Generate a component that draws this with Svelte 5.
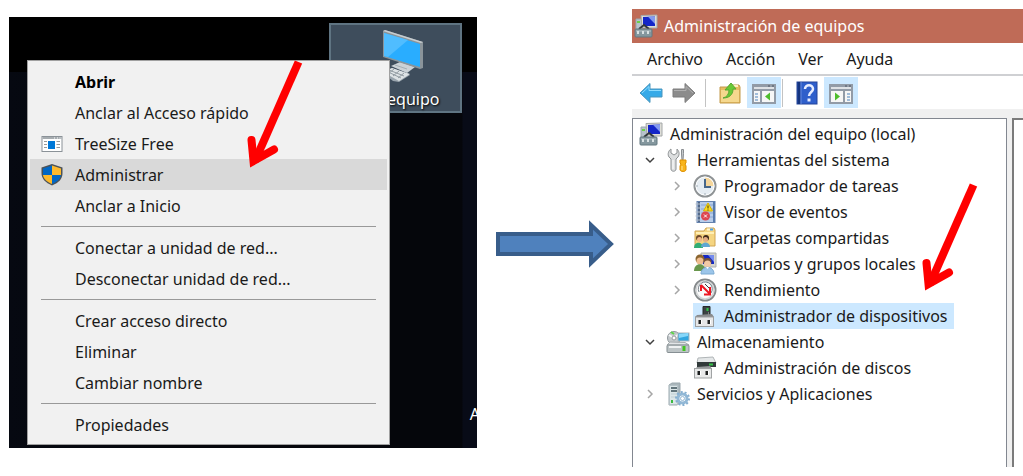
<script>
  const contextMenu = [
    [
      { label: "Abrir", bold: true },
      { label: "Anclar al Acceso rápido" },
      { label: "TreeSize Free", icon: "treesize" },
      { label: "Administrar", icon: "shield", active: true },
      { label: "Anclar a Inicio" },
    ],
    [
      { label: "Conectar a unidad de red..." },
      { label: "Desconectar unidad de red..." },
    ],
    [
      { label: "Crear acceso directo" },
      { label: "Eliminar" },
      { label: "Cambiar nombre" },
    ],
    [{ label: "Propiedades" }],
  ];

  const menuBar = ["Archivo", "Acción", "Ver", "Ayuda"];

  const tree = [
    {
      label: "Herramientas del sistema",
      icon: "tools",
      open: true,
      children: [
        { label: "Programador de tareas", icon: "clock", closed: true },
        { label: "Visor de eventos", icon: "events", closed: true },
        { label: "Carpetas compartidas", icon: "shared", closed: true },
        { label: "Usuarios y grupos locales", icon: "users", closed: true },
        { label: "Rendimiento", icon: "gauge", closed: true },
        { label: "Administrador de dispositivos", icon: "device" },
      ],
    },
    {
      label: "Almacenamiento",
      icon: "storage",
      open: true,
      children: [{ label: "Administración de discos", icon: "disk" }],
    },
    { label: "Servicios y Aplicaciones", icon: "services", closed: true },
  ];

  let selected = $state("Administrador de dispositivos");
</script>

{#snippet redArrow()}
  <svg class="red-arrow" viewBox="0 0 60 116" aria-hidden="true">
    <path d="M53.5 4 10 103" stroke-linecap="butt" />
    <path d="M6.5 82 8.5 103 29 91.5" stroke-linecap="round" />
  </svg>
{/snippet}

{#snippet icon(name)}
  <svg class="icon" viewBox="0 0 24 24" aria-hidden="true">
    {#if name === "treesize"}
      <rect x="2" y="4.5" width="20" height="15" fill="#fff" stroke="#8b9298" />
      <path d="M2.5 6h19" stroke="#a6acb0" stroke-width="2" />
      <path d="M14 6h1M17 6h1M19.5 6h1" stroke="#fff" />
      <rect x="8" y="9" width="7" height="8" fill="#0078d7" />
      <path d="M4 9.5h3M4 12.5h3M4 15.5h3M16.5 9.5h3.5M16.5 12.5h3.5M16.5 15.5h3.5" stroke="#999" />
    {:else if name === "shield"}
      <path d="M12 1 22.5 4.5V10c0 6-3.5 9.5-10.500 12.5C5.500 19.5 1.500 16 1.500 10V4.5z" fill="#4c5358" />
      <path d="M12 2.500V12H3V5.500z" fill="#0067c5" />
      <path d="M12 2.500V12h9V5.500z" fill="#fdb92c" />
      <path d="M12 12v9c-5-2-8.500-5-9-9z" fill="#fdb92c" />
      <path d="M12 12v9c5-2 8.500-5 9-9z" fill="#0067c5" />
    {:else if name === "computer"}
      <path d="M2 5h6v11H2z" fill="#b7c3cb" stroke="#9aa6ae" />
      <path d="M3 8h3" stroke="#6ccf49" stroke-width="2" />
      <path d="M7 1.5 23 1v13L8 14z" fill="#deded8" stroke="#a5a8a8" />
      <path d="m9 3 12-.5V12L9 12z" fill="#1426c8" />
      <path d="M14 2.700 21 2.5V10z" fill="#839af0" />
      <path d="m5 15 5-4 5 4" fill="none" stroke="#32383b" stroke-width="2" />
      <rect x="1" y="15" width="17" height="8" rx="1" fill="#84979e" stroke="#647980" />
      <path d="M2 17h15" stroke="#b4c1c5" />
      <path d="M4 17v3M9 17v3M14 17v3" stroke="#d8e1e3" stroke-width="2" />
    {:else if name === "tools"}
      <path d="M5 1v4l3 2 3-2V1c2 2 3 5 1 8l-2 2v10c0 3-5 3-5 0V11L3 9C1 6 3 2 5 1z" fill="#dcdedf" stroke="#8d9193" />
      <path d="M7 12v9" stroke="#fff" />
      <path d="M15.5 1.5h2v4L17 12h-1l-.5-6z" fill="#c6c9cb" stroke="#898d90" />
      <path d="M14 12h6v3l-1 1 1 2v4c-1 2-5 2-6 0v-4l1-2-1-1z" fill="#f8b41b" stroke="#dd8f00" />
      <path d="M16 18v4" stroke="#ffe293" />
    {:else if name === "clock"}
      <circle cx="12" cy="12" r="10.5" fill="#e6edf3" stroke="#8f9395" stroke-width="2" />
      <path d="M12 3a9 9 0 0 1 9 9h-9z" fill="#f5d69b" />
      <circle cx="12" cy="12" r="9" fill="none" stroke="#fff" />
      <path d="M12 5v8h6" fill="none" stroke="#48678a" stroke-width="2" />
      <path d="M12 19v2M3 12h2" stroke="#a4afb7" />
    {:else if name === "events"}
      <rect x="4" y="1.5" width="18" height="21" fill="#b8cdea" stroke="#6482ae" />
      <path d="M8 5h13M8 9h13M8 13h13M8 17h13" stroke="#8aa7d2" />
      <path d="M21 2v20" stroke="#587caf" stroke-width="2" />
      <path d="M6 2v20" stroke="#536989" stroke-width="2" />
      <path d="M2.5 4H7M2.5 8H7M2.5 12H7M2.5 16H7M2.5 20H7" stroke="#b5bfca" />
      <path d="m15 3 4.500 8h-9z" fill="#fadb21" stroke="#d8b400" />
      <path d="M15 5.5v3M15 9.5v1" stroke="#393400" />
      <circle cx="12.5" cy="16" r="4.5" fill="#de4651" />
      <path d="m11 14.5 3 3m0-3-3 3" stroke="#fff" />
    {:else if name === "shared"}
      <path d="M2 5h9l2-3h8l1 2v16H2z" fill="#f5d581" stroke="#d0a552" />
      <path d="M14 3.5h6" stroke="#fff6cf" stroke-width="2" />
      <path d="M17 3.5h3" stroke="#4e9fdd" stroke-width="2" />
      <path d="M3 7h18" stroke="#ffefb5" stroke-width="2" />
      <circle cx="6" cy="12" r="3" fill="#6d482b" />
      <circle cx="13" cy="12" r="3" fill="#3f2a1b" />
      <circle cx="6.5" cy="13.5" r="2.5" fill="#efb789" />
      <circle cx="12.5" cy="13.5" r="2.5" fill="#e2ad83" />
      <path d="M1 22c0-7 9-7 9 0z" fill="#32ad75" />
      <path d="M8 21c0-6 9-6 9 0z" fill="#5fa7d1" />
    {:else if name === "users"}
      <path d="M8 1h15v14H8z" fill="#d5d5ce" stroke="#adb0ae" />
      <path d="M10 3h11v9H10z" fill="#1428c5" />
      <path d="M15 3h6v7z" fill="#768ced" />
      <circle cx="7" cy="7" r="4.5" fill="#8b652f" />
      <circle cx="7" cy="9" r="3.5" fill="#f0bd90" />
      <circle cx="14.5" cy="10" r="4" fill="#765237" />
      <circle cx="14.5" cy="12" r="3.5" fill="#f2c9a5" />
      <path d="M1 19c0-9 11-9 12 0z" fill="#69974c" />
      <path d="M8 22c0-9 13-9 13 0z" fill="#9bc5e9" stroke="#7baad2" />
      <path d="m13 15 1.5 2 1.5-2" fill="#fff" />
    {:else if name === "gauge"}
      <circle cx="12" cy="12" r="10.5" fill="#fafafa" stroke="#85898b" stroke-width="2" />
      <circle cx="12" cy="12" r="9" fill="none" stroke="#d2d5d6" stroke-width="1.5" />
      <path d="M6 14A7 7 0 1 1 18 15" fill="none" stroke="#75828a" />
      <path d="M8 7l9 9M17 9v7.500h-6M8 7v6" fill="none" stroke="#ec1722" stroke-width="2" />
      <path d="m12 6 4 4" stroke="#39393a" />
    {:else if name === "device"}
      <path d="M10 2.5h7v9h-7z" fill="#3c4243" stroke="#252929" />
      <path d="M14.5 4v3" stroke="#2ec447" stroke-width="2" />
      <path d="M15.5 8v3" stroke="#798080" />
      <path d="m4 11 15-1 2 3H2z" fill="#898b8d" />
      <rect x="2.5" y="13" width="18" height="9.5" fill="#e6e7e8" stroke="#9b9ea0" />
      <path d="M7 16v4M16 16v4" stroke="#202324" stroke-width="3" />
      <path d="M8.5 16v4M17.5 16v4" stroke="#fff" />
    {:else if name === "storage"}
      <circle cx="8" cy="8" r="6.5" fill="#c4c9cc" stroke="#8f979b" />
      <path d="m8 8-5-3M8 8l5-4" stroke="#f5f7f8" stroke-width="2" />
      <circle cx="8" cy="8" r="2" fill="#fff" stroke="#949ca0" />
      <path d="m5 2 3 2" stroke="#5cd449" stroke-width="2" />
      <rect x="12" y="3" width="11" height="8" fill="#31a6df" stroke="#aab6bc" />
      <path d="m13 4 9-1v3l-9 2z" fill="#85d7fa" />
      <path d="m4 12 15 .5 4 2.500H1z" fill="#e2e5e7" stroke="#a6acaf" />
      <rect x="1" y="15" width="22" height="7.5" rx="1" fill="#bdc4c6" stroke="#868f93" />
      <path d="M3 17h12" stroke="#eef1f2" stroke-width="2" />
      <path d="M18 16v5" stroke="#42c420" stroke-width="3" />
    {:else if name === "disk"}
      <path d="m5 2 15-1 3 6H4z" fill="#e4e7e8" stroke="#b0b5b7" />
      <path d="M4 6h19v5H4z" fill="#323a3b" />
      <path d="M16 8.5h4" stroke="#35c246" stroke-width="2" />
      <path d="m4 11 13-1 2 3H2z" fill="#96999b" />
      <rect x="1.5" y="12.5" width="17" height="9.5" fill="#e8e9e9" stroke="#a0a3a4" />
      <path d="M6 15v4M14 15v4" stroke="#1c1e1f" stroke-width="3" />
      <path d="M7.5 15v4M15.5 15v4" stroke="#fff" />
    {:else if name === "services"}
      <path d="m3 3 3-2h8v20l-3 2H3z" fill="#aab6bb" stroke="#9ba8ae" />
      <path d="M3.5 3.5h8v19h-8z" fill="#dce6e8" stroke="#b5c2c7" />
      <path d="M5 6h6M5 9h6" stroke="#62747b" stroke-width="2" />
      <path d="M5 12h6M5 15h6" stroke="#c0ced4" />
      <path d="M6 18v3" stroke="#3bbb40" stroke-width="2" />
      <circle cx="16.5" cy="16.5" r="4.5" fill="#fff" stroke="#92b8d6" stroke-width="3" />
      <circle cx="16.5" cy="16.5" r="6.5" fill="none" stroke="#84aed0" stroke-width="2" stroke-dasharray="2 2" />
      <circle cx="16.5" cy="16.5" r="2" fill="#fff" stroke="#94b8d3" />
    {:else if name === "back" || name === "forward"}
      <g transform={name === "forward" ? "matrix(-1 0 0 1 24 0)" : undefined}>
        <path
          d="M1 12 11 2.500V8h12v8H11v5.500z"
          fill={name === "back" ? "#36aae8" : "#8c8c8c"}
          stroke={name === "back" ? "#4a96bd" : "#7d7d7d"}
          stroke-linejoin="round"
        />
        <path d="m3 12 7-6.500v4h12" fill="none" stroke={name === "back" ? "#8ddcff" : "#b0b0b0"} />
      </g>
    {:else if name === "up"}
      <path d="M2 6h8l2-2h9l1 2v16H2z" fill="#e8bd62" stroke="#c29a4c" />
      <path d="M3 9h18v12H3z" fill="#f5d88e" />
      <path d="M14 5h6" stroke="#fff1bf" stroke-width="2" />
      <path d="M5 17c4-1 6-4 6-8H7l6-7 5 6h-3c0 6-4 9-10 9z" fill="#69c936" stroke="#57a932" />
    {:else if name === "tree-pane" || name === "action-pane"}
      <rect x="1" y="4" width="22" height="18" fill="#f6f6f6" stroke="#929ba7" stroke-width="2" />
      <path d="M1 5h22M1 9h22" stroke="#929ba7" stroke-width="2" />
      <path d="M2 7h20" stroke="#c6ccd4" />
      <path d="M16 5h2M20 5h2" stroke="#4c5563" />
      {#if name === "tree-pane"}
        <path d="M9 10v11" stroke="#929ba7" stroke-width="2" />
        <path d="M3 13h3M3 16h3M3 19h3" stroke="#4d83bd" />
        <path d="m18 11.5v8l-5-4z" fill="#4fbd2d" />
      {:else}
        <path d="M15 10v11" stroke="#929ba7" stroke-width="2" />
        <path d="M18 13h3M18 16h3M18 19h3" stroke="#4d83bd" />
        <path d="m6 11.5v8l5-4z" fill="#4fbd2d" />
      {/if}
    {:else if name === "help"}
      <rect x="2" y="1" width="20" height="22" fill="#2f5fcb" stroke="#24459a" />
      <path d="M4 1v22" stroke="#15347f" stroke-width="3" />
      <path d="M6 1v22" stroke="#668be0" />
      <path d="M10 8c0-5 8-5 8 0 0 3-4 3-4 7" fill="none" stroke="#e7edff" stroke-width="2.5" />
      <path d="M14 17.5v3" stroke="#e7edff" stroke-width="3" />
    {/if}
  </svg>
{/snippet}

{#snippet node(item)}
  <li>
    <div class="row">
      <span class="toggle">
        {#if item.open}
          <svg viewBox="0 0 10 10"><path d="m1 3 4 4 4-4" stroke="#404040" /></svg>
        {:else if item.closed}
          <svg viewBox="0 0 10 10"><path d="m3 1 4 4-4 4" stroke="#a6a6a6" /></svg>
        {/if}
      </span>
      <button class="label" class:selected={selected === item.label} onclick={() => (selected = item.label)}>
        {@render icon(item.icon)}<span>{item.label}</span>
      </button>
    </div>
    {#if item.children}
      <ul class="nested">
        {#each item.children as child}
          {@render node(child)}
        {/each}
      </ul>
    {/if}
  </li>
{/snippet}

<main>
  <section class="desktop">
    <div class="strip"></div>
    <div class="shortcut">
      <svg viewBox="0 0 54 54" aria-hidden="true">
        <path d="m14 44 9-5 18 7-11 7-6-1z" fill="#9aa5ae" />
        <path d="m14 43 9-4 18 6-11 7z" fill="#dde2e5" />
        <path d="m17 42 15 7M20 41l15 6M25 40l-6 5M30 42l-6 5M35 44l-6 5" stroke="#929ca3" />
        <path d="m22 37 9-4 15 5-8 6z" fill="#cbd2d7" />
        <path d="m26 36 12 4" stroke="#a5afb5" />
        <path d="m14 2 2-1 38 12v26l-3 1L14 28z" fill="#8a949a" />
        <path d="m14 2 2-1 38 12-2 1z" fill="#c7cdd0" />
        <path d="M15 4 51 15v23L15 27z" fill="#29adff" />
        <path d="m15 4 24 7-20 17-4-1z" fill="#50bdff" />
      </svg>
      <span>Este equipo</span>
    </div>
    <span class="cut-label">A</span>
    <div class="context-menu" role="menu">
      {#each contextMenu as group}
        <div class="group">
          {#each group as item}
            <button role="menuitem" class="menu-item" class:active={item.active} class:bold={item.bold}>
              <span class="slot">{#if item.icon}{@render icon(item.icon)}{/if}</span>
              {item.label}
            </button>
          {/each}
        </div>
      {/each}
    </div>
    <div class="pointer on-menu">{@render redArrow()}</div>
  </section>

  <svg class="next" viewBox="0 0 118 52" aria-hidden="true">
    <path d="M2 15h93V6l20 19-20 19v-9H2z" fill="#4f81bd" stroke="#385d8a" stroke-width="4" />
  </svg>

  <section class="window">
    <header>
      {@render icon("computer")}
      <span>Administración de equipos</span>
    </header>
    <nav>
      {#each menuBar as entry}
        <button>{entry}</button>
      {/each}
    </nav>
    <div class="toolbar">
      <button aria-label="Atrás">{@render icon("back")}</button>
      <button aria-label="Adelante">{@render icon("forward")}</button>
      <i></i>
      <button class="boxed" aria-label="Subir un nivel">{@render icon("up")}</button>
      <button class="boxed on" aria-label="Árbol de consola">{@render icon("tree-pane")}</button>
      <i class="tight"></i>
      <button class="boxed" aria-label="Ayuda">{@render icon("help")}</button>
      <button class="boxed on" aria-label="Panel de acciones">{@render icon("action-pane")}</button>
    </div>
    <div class="panes">
      <div class="tree">
        <div class="row">
          <button class="label">{@render icon("computer")}<span>Administración del equipo (local)</span></button>
        </div>
        <ul>
          {#each tree as item}
            {@render node(item)}
          {/each}
        </ul>
        <div class="pointer on-tree">{@render redArrow()}</div>
      </div>
      <div class="details"></div>
    </div>
  </section>
</main>

<style>
  :global(body) {
    background: #fff;
  }
  main {
    display: grid;
    grid-template-columns: minmax(0, 468fr) 117px minmax(0, 391fr);
    column-gap: 19px;
    align-items: start;
    padding: 9px 0 9px 9px;
    font: 16px/26px "Noto Sans", "Open Sans", sans-serif;
    color: #1a1a1a;
  }
  button {
    font: inherit;
    color: inherit;
    background: none;
    border: 0;
    padding: 0;
    text-align: left;
    white-space: nowrap;
  }
  ul {
    list-style: none;
    margin: 0;
    padding: 0;
  }
  .icon {
    display: block;
    flex: none;
    width: 24px;
    height: 24px;
  }

  .desktop {
    position: relative;
    overflow: hidden;
    margin-top: 8px;
    padding: 43px 87px 3px 18px;
    background: linear-gradient(to left, #080b17 14px, #05060b 15px, #05060b 60%, #060911);
  }
  .strip {
    position: absolute;
    inset: 0 0 auto;
    height: 55px;
    background: #000;
  }
  .shortcut {
    position: absolute;
    top: 6px;
    right: 15px;
    box-sizing: border-box;
    width: 133px;
    height: 90px;
    display: flex;
    flex-direction: column;
    align-items: center;
    padding-top: 4px;
    border: 2px solid #5f7482;
    background: #3e4d5c;
    color: #fff;
    text-shadow: 1px 1px 2px #000;
  }
  .shortcut svg {
    flex: none;
    width: 54px;
    height: 54px;
    margin-bottom: 3px;
  }
  .cut-label {
    position: absolute;
    right: -3px;
    bottom: 21px;
    color: #fff;
  }

  .context-menu {
    position: relative;
    border: 1px solid #a0a0a0;
    padding: 5px 2px 4px;
    background: #f1f1f1;
  }
  .group + .group::before {
    content: "";
    display: block;
    height: 1px;
    margin: 5px 11px;
    background: #999;
  }
  .menu-item {
    display: flex;
    align-items: center;
    width: 100%;
    height: 31px;
  }
  .menu-item.active {
    background: #d9d9d9;
  }
  .menu-item.bold {
    color: #000;
    font-weight: 700;
  }
  .slot {
    width: 35px;
    padding-left: 10px;
  }

  .pointer {
    position: absolute;
    pointer-events: none;
  }
  .on-menu {
    left: 236px;
    top: 41px;
  }
  .on-tree {
    left: 287px;
    top: 62px;
  }
  .red-arrow {
    display: block;
    width: 60px;
    height: 116px;
    fill: none;
    stroke: #f00;
    stroke-width: 8px;
  }

  .next {
    width: 118px;
    height: 52px;
    margin-top: 210px;
  }

  .window {
    overflow: hidden;
    background: #f0f0f0;
  }
  header {
    display: flex;
    align-items: center;
    gap: 6px;
    height: 34px;
    padding-left: 2px;
    background: #bf6b57;
    color: #fff;
    white-space: nowrap;
  }
  nav {
    display: flex;
    gap: 23px;
    padding: 3px 15px 2px;
    background: #fff;
    border-bottom: 2px solid #cfd0d3;
  }
  .toolbar {
    display: flex;
    align-items: center;
    padding: 1px 7px;
    background: #fff;
  }
  .toolbar button {
    display: grid;
    place-items: center;
    width: 24px;
    height: 31px;
    margin-right: 9px;
  }
  .toolbar .boxed {
    width: 34px;
    margin-right: 0;
  }
  .toolbar .on {
    background: #cce8ff;
  }
  .toolbar i {
    width: 1px;
    height: 28px;
    margin-right: 7px;
    background: #c3c3c3;
  }
  .toolbar .tight {
    margin: 0 7px 0 1px;
  }
  .panes {
    display: flex;
    gap: 5px;
    padding-top: 9px;
  }
  .tree {
    position: relative;
    flex: 1;
    min-width: 0;
    padding: 2px 0 60px 6px;
    background: #fff;
    border: 1px solid #828790;
    border-bottom: 0;
  }
  .details {
    width: 9px;
    background: #fff;
    border: solid #7b7b7b;
    border-width: 2px 0 0 2px;
  }
  .row {
    display: flex;
    height: 26px;
  }
  .toggle {
    display: grid;
    place-items: center;
    width: 22px;
    margin-right: 5px;
  }
  .toggle svg {
    width: 10px;
    height: 10px;
    fill: none;
    stroke-width: 1.5;
  }
  .nested {
    padding-left: 27px;
  }
  .label {
    display: flex;
    align-items: center;
    gap: 7px;
    padding-right: 6px;
  }
  .label.selected {
    background: #cce8ff;
  }
</style>
